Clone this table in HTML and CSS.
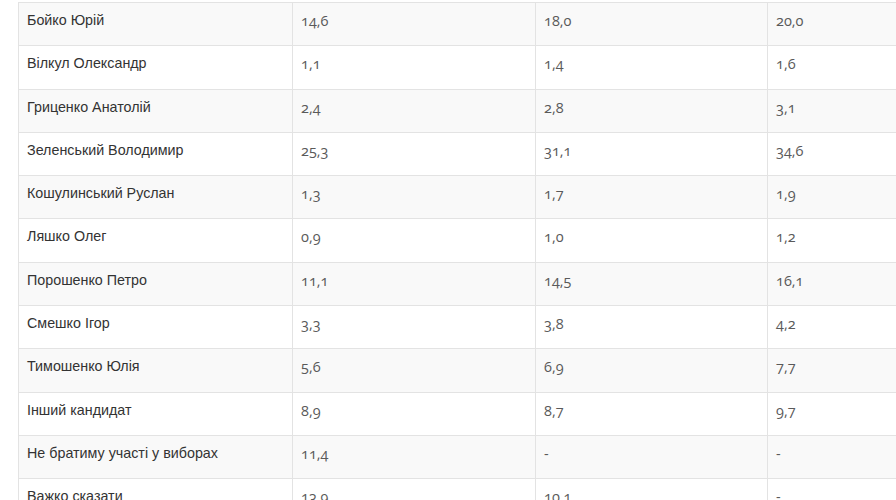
FILE: index.html
```html
<!DOCTYPE html>
<html lang="uk">
<head>
<meta charset="utf-8">
<title>Опитування</title>
<link rel="stylesheet" href="styles.css">
</head>
<body>
<table class="poll">
  <colgroup>
    <col class="c-name"><col class="c-a"><col class="c-b"><col class="c-c">
  </colgroup>
  <tbody>
    <tr><td class="name">Бойко Юрій</td><td>14,6</td><td>18,0</td><td>20,0</td></tr>
    <tr><td class="name">Вілкул Олександр</td><td>1,1</td><td>1,4</td><td>1,6</td></tr>
    <tr><td class="name">Гриценко Анатолій</td><td>2,4</td><td>2,8</td><td>3,1</td></tr>
    <tr><td class="name">Зеленський Володимир</td><td>25,3</td><td>31,1</td><td>34,6</td></tr>
    <tr><td class="name">Кошулинський Руслан</td><td>1,3</td><td>1,7</td><td>1,9</td></tr>
    <tr><td class="name">Ляшко Олег</td><td>0,9</td><td>1,0</td><td>1,2</td></tr>
    <tr><td class="name">Порошенко Петро</td><td>11,1</td><td>14,5</td><td>16,1</td></tr>
    <tr><td class="name">Смешко Ігор</td><td>3,3</td><td>3,8</td><td>4,2</td></tr>
    <tr><td class="name">Тимошенко Юлія</td><td>5,6</td><td>6,9</td><td>7,7</td></tr>
    <tr><td class="name">Інший кандидат</td><td>8,9</td><td>8,7</td><td>9,7</td></tr>
    <tr><td class="name">Не братиму участі у виборах</td><td>11,4</td><td>-</td><td>-</td></tr>
    <tr><td class="name">Важко сказати</td><td>13,9</td><td>10,1</td><td>-</td></tr>
  </tbody>
</table>
</body>
</html>
```

FILE: styles.css
```css
html, body {
  margin: 0;
  padding: 0;
  overflow: hidden;
  background: #fff;
}

body {
  padding: 0 0 0 18px;
}

.poll {
  border-collapse: collapse;
  table-layout: fixed;
  width: 982px;
  margin-top: 2px;
  border-left: 1px solid #e3e3e3;
  border-top: 1px solid #e3e3e3;
}

.c-name { width: 274px; }
.c-a { width: 243px; }
.c-b { width: 232px; }
.c-c { width: 233px; }

.poll td {
  height: 43.3px;
  box-sizing: border-box;
  padding: 7px 8px 14px;
  vertical-align: top;
  border-right: 1px solid #e3e3e3;
  border-bottom: 1px solid #e3e3e3;
  font-family: "Open Sans", sans-serif;
  font-variant-numeric: oldstyle-nums;
  font-weight: 400;
  font-size: 14.5px;
  line-height: 21px;
  color: #5a5a5a;
  white-space: nowrap;
}

.poll td.name {
  font-family: "Liberation Sans", Arial, sans-serif;
  font-size: 14.3px;
  color: #333;
}

.poll tbody tr:nth-child(odd) td {
  background: #f9f9f9;
}
```
